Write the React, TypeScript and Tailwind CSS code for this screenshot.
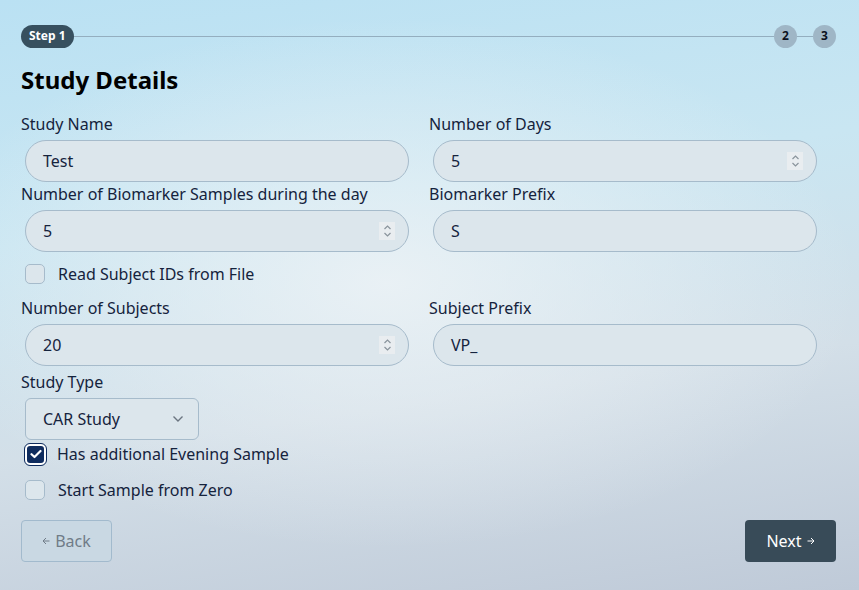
import React from 'react';

function Spinner() {
  return (
    <span className="flex h-[18px] w-[16px] flex-col items-center justify-center bg-[#e9edf0]">
      <svg width="9" height="14" viewBox="0 0 9 14" fill="none" stroke="#8a949c" strokeWidth="1.2">
        <path d="M1.5 5 L4.5 2 L7.5 5" />
        <path d="M1.5 9 L4.5 12 L7.5 9" />
      </svg>
    </span>
  );
}

function Arrow({ left }: { left?: boolean }) {
  return (
    <svg width="8" height="8" viewBox="0 0 8 8" fill="none" stroke="currentColor" strokeWidth="1" className={left ? 'rotate-180' : ''}>
      <path d="M0.5 4 H7 M4 1 L7 4 L4 7" />
    </svg>
  );
}

function Field({ label, value, number }: { label: string; value: string; number?: boolean }) {
  return (
    <div className="flex flex-col">
      <label className="mb-1 h-6 text-base leading-6 text-[#15233d]">{label}</label>
      <div className="mx-1 flex h-[42px] items-center rounded-full border border-[#a6bbcb] bg-[#dce6ec] pl-[17px] pr-[13px]">
        <span className="flex-1 text-base text-[#15233d]">{value}</span>
        {number && <Spinner />}
      </div>
    </div>
  );
}

function Check({ label, checked }: { label: string; checked?: boolean }) {
  return (
    <div className="flex h-6 items-center pl-1">
      {checked ? (
        <span className="mr-[11px] flex h-[21px] w-[21px] items-center justify-center rounded-[5px] border-2 border-white bg-[#0f2c5e] outline outline-1 outline-[#0f2c5e]">
          <svg width="12" height="10" viewBox="0 0 12 10" fill="none" stroke="white" strokeWidth="2.2" strokeLinecap="round" strokeLinejoin="round">
            <path d="M1.5 5.2 L4.5 8 L10.5 2" />
          </svg>
        </span>
      ) : (
        <span className="mr-[13px] h-[20px] w-[20px] rounded-[5px] border border-[#a6bbcb] bg-[#dce6ec]" />
      )}
      <span className="text-base text-[#15233d]">{label}</span>
    </div>
  );
}

export default function App() {
  return (
    <div className="h-[590px] w-full overflow-hidden bg-[radial-gradient(ellipse_55%_45%_at_45%_48%,rgba(238,243,246,0.85),transparent),linear-gradient(172deg,#bae1f3_0%,#c9e6f2_35%,#d3dfe8_65%,#bfcad8_100%)] pr-[23px] pl-[21px] pt-6 font-['Noto_Sans',sans-serif]">
      {/* stepper */}
      <div className="flex h-6 items-center">
        <span className="flex h-[23px] items-center rounded-full bg-[#37505f] px-2 text-xs font-bold text-white">Step 1</span>
        <span className="h-px flex-1 bg-[#94aebf]" />
        <span className="flex h-[23px] w-[23px] items-center justify-center rounded-full bg-[#9fb6c6] text-xs font-bold text-[#0b1220]">2</span>
        <span className="h-px w-4 bg-[#94aebf]" />
        <span className="flex h-[23px] w-[23px] items-center justify-center rounded-full bg-[#9fb6c6] text-xs font-bold text-[#0b1220]">3</span>
      </div>

      <h1 className="mt-4 mb-4 h-8 text-2xl leading-8 font-bold text-black">Study Details</h1>

      <div className="grid w-[800px] grid-cols-2 gap-x-4">
        <Field label="Study Name" value="Test" />
        <Field label="Number of Days" value="5" number />
        <Field label="Number of Biomarker Samples during the day" value="5" number />
        <Field label="Biomarker Prefix" value="S" />
      </div>

      <div className="mt-[10px]">
        <Check label="Read Subject IDs from File" />
      </div>

      <div className="mt-[10px] grid w-[800px] grid-cols-2 gap-x-4">
        <Field label="Number of Subjects" value="20" number />
        <Field label="Subject Prefix" value="VP_" />
      </div>

      <div className="mt-1 flex flex-col">
        <label className="mb-1 h-6 text-base leading-6 text-[#15233d]">Study Type</label>
        <div className="mx-1 flex h-[42px] w-[174px] items-center justify-between rounded-md border border-[#a6bbcb] bg-[#dce6ec] pl-[17px] pr-[14px]">
          <span className="text-base text-[#15233d]">CAR Study</span>
          <svg width="12" height="8" viewBox="0 0 12 8" fill="none" stroke="#6b7580" strokeWidth="1.4">
            <path d="M1.5 1.5 L6 6 L10.5 1.5" />
          </svg>
        </div>
      </div>

      <div className="mt-[2px] flex flex-col gap-3">
        <Check label="Has additional Evening Sample" checked />
        <Check label="Start Sample from Zero" />
      </div>

      <div className="mt-[18px] flex items-center justify-between">
        <button className="flex h-[42px] w-[91px] items-center justify-center gap-[5px] rounded border border-[#a2bacd] bg-[#c9d8e3] text-base text-[#707c88]">
          <Arrow left />Back
        </button>
        <button className="flex h-[42px] w-[91px] items-center justify-center gap-[5px] rounded bg-[#384b58] text-base text-white">
          Next<Arrow />
        </button>
      </div>
    </div>
  );
}
